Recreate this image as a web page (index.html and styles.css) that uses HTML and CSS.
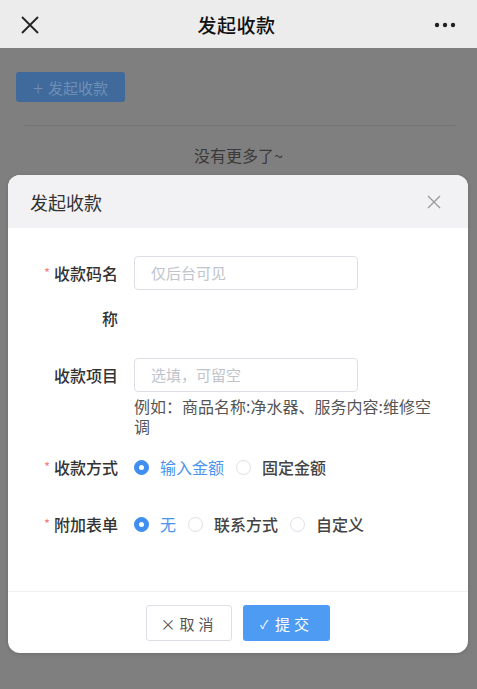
FILE: index.html
```html
<!DOCTYPE html>
<html lang="zh-CN">
<head>
<meta charset="utf-8">
<title>发起收款</title>
<link rel="stylesheet" href="styles.css">
</head>
<body>
<div class="topbar">
  <svg class="tb-close" width="18" height="18" viewBox="0 0 18 18"><path d="M1 1L17 17M17 1L1 17" stroke="#222" stroke-width="1.8" fill="none"/></svg>
  <div class="tb-title">发起收款</div>
  <svg class="tb-more" width="22" height="6" viewBox="0 0 22 6"><circle cx="3" cy="3" r="2.2" fill="#222"/><circle cx="11" cy="3" r="2.2" fill="#222"/><circle cx="19" cy="3" r="2.2" fill="#222"/></svg>
</div>
<div class="page">
  <div class="launch"><span class="plus">+</span>发起收款</div>
  <div class="divider"></div>
  <div class="nomore">没有更多了~</div>

  <div class="modal">
    <div class="m-head">
      <span class="m-title">发起收款</span>
      <svg class="m-close" width="14" height="14" viewBox="0 0 14 14"><path d="M1 1L13 13M13 1L1 13" stroke="#9a9a9a" stroke-width="1.3" fill="none"/></svg>
    </div>
    <div class="m-body">
      <div class="row row-name">
        <div class="label wrap"><span class="req">*</span>收款码名称</div>
        <div class="field"><div class="input">仅后台可见</div></div>
      </div>
      <div class="row row-item">
        <div class="label">收款项目</div>
        <div class="field">
          <div class="input">选填，可留空</div>
          <div class="hint">例如：商品名称:净水器、服务内容:维修空调</div>
        </div>
      </div>
      <div class="row row-way">
        <div class="label"><span class="req">*</span>收款方式</div>
        <div class="field radios">
          <span class="radio on"></span><span class="rtext on">输入金额</span>
          <span class="radio"></span><span class="rtext">固定金额</span>
        </div>
      </div>
      <div class="row row-form">
        <div class="label"><span class="req">*</span>附加表单</div>
        <div class="field radios">
          <span class="radio on"></span><span class="rtext on">无</span>
          <span class="radio"></span><span class="rtext">联系方式</span>
          <span class="radio"></span><span class="rtext">自定义</span>
        </div>
      </div>
    </div>
    <div class="m-foot">
      <div class="btn cancel"><span class="bi">×</span>取消</div>
      <div class="btn submit"><span class="bi check">✓</span>提交</div>
    </div>
  </div>
</div>
</body>
</html>
```

FILE: styles.css
```css
* { box-sizing: border-box; }
html, body { margin: 0; padding: 0; }
body {
  font-family: "Noto Sans CJK SC", "Noto Sans", sans-serif;
  width: 477px;
  height: 689px;
  overflow: hidden;
  background: #7f7f7f;
}
.topbar {
  height: 48px;
  background: #ececec;
  display: flex;
  align-items: center;
  justify-content: space-between;
  padding: 0 21px 0 21px;
}
.tb-close { display: block; margin-top: 1px; }
.tb-title {
  font-size: 19px;
  font-weight: 500;
  color: #111;
  letter-spacing: 0.5px;
}
.tb-more { display: block; margin-top: 2px; }

.page {
  position: relative;
  height: 641px;
  background: #7f7f7f;
  padding: 24px 16px 0 16px;
}
.launch {
  width: 109px;
  height: 30px;
  border-radius: 3px;
  background: #3f6a9b;
  color: #6e8fb6;
  font-size: 15px;
  display: flex;
  align-items: center;
  justify-content: center;
  gap: 5px;
}
.plus { font-size: 19px; font-weight: 300; line-height: 1; margin-top: -2px; }
.divider {
  margin: 23px 6px 0 9px;
  height: 1px;
  background: #747474;
}
.nomore {
  text-align: center;
  font-size: 16px;
  color: #393939;
  margin-top: 18px;
  line-height: 22px;
}

.modal {
  position: absolute;
  top: 127px;
  left: 8px;
  width: 460px;
  background: #fff;
  border-radius: 12px;
  overflow: hidden;
  box-shadow: 0 1px 4px rgba(0,0,0,0.15);
}
.m-head {
  height: 53px;
  background: #f2f2f4;
  display: flex;
  align-items: center;
  justify-content: space-between;
  padding: 0 27px 0 22px;
}
.m-title { font-size: 18px; color: #333; }
.m-close { display: block; }

.m-body { padding: 22px 24px 50px 0; }
.row { display: flex; align-items: flex-start; }
.label {
  width: 110px;
  flex: none;
  padding-left: 32px;
  text-align: right;
  font-size: 16px;
  font-weight: 500;
  color: #333;
  line-height: 34px;
}
.label.wrap { line-height: 45px; }
.req {
  color: #f07f7f;
  font-weight: 400;
  font-size: 13px;
  margin-right: 4px;
  vertical-align: 2px;
}
.field { margin-left: 16px; flex: 1; }
.row-name .field { padding-top: 6px; }
.input {
  width: 224px;
  height: 34px;
  border: 1px solid #dcdfe6;
  border-radius: 4px;
  font-size: 15px;
  color: #c0c4cc;
  line-height: 32px;
  padding-left: 16px;
}
.row-item { margin-top: 17px; }
.hint {
  margin-top: 4px;
  font-size: 16px;
  line-height: 20px;
  color: #555;
}
.row-way { margin-top: 14px; }
.row-form { margin-top: 23px; }
.radios {
  display: flex;
  align-items: center;
  height: 34px;
}
.radio {
  width: 15px;
  height: 15px;
  border-radius: 50%;
  border: 1px solid #dcdfe6;
  background: #fff;
  margin-right: 11px;
  flex: none;
  position: relative;
}
.radio.on {
  background: #3f8ef0;
  border-color: #3f8ef0;
}
.radio.on::after {
  content: "";
  position: absolute;
  left: 50%;
  top: 50%;
  width: 5px;
  height: 5px;
  margin: -2.5px 0 0 -2.5px;
  background: #fff;
  border-radius: 50%;
}
.rtext {
  font-size: 16px;
  color: #444;
  margin-right: 12px;
  font-weight: 500;
}
.rtext.on { color: #4a94ec; font-weight: 400; }

.m-foot {
  border-top: 1px solid #efefef;
  padding: 13px 0 12px 0;
  display: flex;
  justify-content: center;
  gap: 11px;
}
.btn {
  height: 36px;
  width: 86px;
  border-radius: 3px;
  font-size: 15px;
  display: flex;
  align-items: center;
  justify-content: center;
  letter-spacing: 4px;
}
.cancel {
  border: 1px solid #dcdfe6;
  color: #555;
  background: #fff;
}
.submit {
  width: 87px;
  background: #4d9bf3;
  color: #fff;
}
.bi { margin-right: 4px; letter-spacing: 0; font-size: 15px; }
.check { font-size: 12px; margin-right: 7px; }
```
